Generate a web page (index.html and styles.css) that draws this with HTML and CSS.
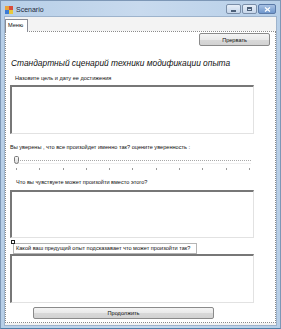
FILE: index.html
```html
<!DOCTYPE html>
<html lang="ru">
<head>
<meta charset="utf-8">
<title>Scenario</title>
<link rel="stylesheet" href="styles.css">
</head>
<body>
<div class="window">
  <div class="titlebar">
    <svg class="app-icon" width="8" height="8" viewBox="0 0 8 8">
      <rect x="0" y="0" width="4" height="4" fill="#e8a23a"/>
      <rect x="4" y="0" width="4" height="4" fill="#d94c3c"/>
      <rect x="0" y="4" width="4" height="4" fill="#3a7bd5"/>
      <rect x="4" y="4" width="4" height="4" fill="#e8c83a"/>
    </svg>
    <span class="title">Scenario</span>
    <div class="controls">
      <span class="ctl"><span class="glyph-min"></span></span>
      <span class="ctl"><span class="glyph-max"></span></span>
      <span class="ctl close"><svg width="7" height="5" viewBox="0 0 7 5"><path d="M1 0.5 L6 4.5 M6 0.5 L1 4.5" stroke="#fff" stroke-width="1.3"/></svg></span>
    </div>
  </div>
  <div class="client">
    <div class="tabs"><span class="tab">Меню</span></div>
    <div class="page">
      <div class="toprow"><button class="btn btn-stop">Прервать</button></div>
      <div class="heading">Стандартный сценарий техники модификации опыта</div>
      <div class="lbl lbl-goal">Назовите цель и дату ее достижения</div>
      <div class="box box-goal"></div>
      <div class="lbl lbl-sure">Вы уверены , что все произойдет именно так? оцените уверенность :</div>
      <div class="slider">
        <div class="track"></div>
        <div class="thumb"></div>
        <div class="ticks">
          <span></span><span></span><span></span><span></span><span></span><span></span><span></span><span></span><span></span><span></span><span></span>
        </div>
      </div>
      <div class="lbl lbl-feel">Что вы чувствуете может произойти вместо этого?</div>
      <div class="box box-feel"></div>
      <div class="qrow">
        <div class="qbox"><span class="handle"></span>Какой ваш предущий опыт подсказавает что может произойти так?</div>
      </div>
      <div class="box box-exp"></div>
      <div class="bottomrow"><button class="btn btn-next">Продолжить</button></div>
    </div>
  </div>
</div>
</body>
</html>
```
FILE: styles.css
```css
html, body {
  margin: 0;
  padding: 0;
}
body {
  width: 281px;
  height: 329px;
  overflow: hidden;
  font-family: "Liberation Sans", Arial, sans-serif;
  color: #111;
}
.window {
  width: 281px;
  height: 329px;
  box-sizing: border-box;
  background: linear-gradient(90deg, #b7cfe8 0%, #c8daee 50%, #b7cfe8 100%);
  border: 1px solid #7d97b6;
  border-bottom-color: #4f7fa8;
  padding: 0 3px 2px 3px;
  display: flex;
  flex-direction: column;
}
.titlebar {
  height: 15px;
  display: flex;
  align-items: center;
  flex: none;
}
.app-icon {
  margin-left: 1px;
  margin-top: 2px;
}
.title {
  font-size: 7px;
  margin-left: 3px;
  margin-top: 2px;
  color: #1e2a3a;
}
.controls {
  margin-left: auto;
  margin-right: 1px;
  margin-top: 1px;
  display: flex;
  gap: 1px;
}
.ctl {
  width: 15px;
  height: 10px;
  box-sizing: border-box;
  border: 1px solid #7a8ea8;
  border-radius: 2px;
  background: linear-gradient(#e6eef8, #c6d6ea);
  display: flex;
  align-items: center;
  justify-content: center;
}
.ctl.close {
  width: 18px;
  background: linear-gradient(#a9c2e4, #6f97cc);
  border-color: #5a7aa8;
}
.glyph-min {
  width: 5px;
  height: 2px;
  background: #4c5f78;
  margin-top: 3px;
}
.glyph-max {
  width: 5px;
  height: 4px;
  box-sizing: border-box;
  border: 1px solid #4c5f78;
  border-top-width: 2px;
}
.client {
  flex: 1;
  background: #f3f3f3;
  border: 1px solid #9db3cc;
  display: flex;
  flex-direction: column;
  padding: 1px 0 2px 0;
}
.tabs {
  height: 13px;
  display: flex;
  align-items: flex-end;
  flex: none;
}
.tab {
  height: 13px;
  box-sizing: border-box;
  width: 23px;
  border: 1px solid #898c95;
  border-bottom: none;
  background: #fff;
  font-size: 5.6px;
  line-height: 11px;
  padding-left: 2px;
  border-radius: 1px 1px 0 0;
  position: relative;
  top: 1px;
}
.page {
  flex: 1;
  background: #fff;
  border: 1px dotted #8a8a8a;
  display: flex;
  flex-direction: column;
}
.toprow {
  display: flex;
  justify-content: flex-end;
  margin-top: 1px;
  padding-right: 5px;
}
.btn {
  font-family: "Liberation Sans", Arial, sans-serif;
  font-size: 5.6px;
  height: 13px;
  padding: 0;
  box-sizing: border-box;
  border: 1px solid #8a8a8a;
  border-radius: 2px;
  background: linear-gradient(#f4f4f4 0%, #e9e9e9 50%, #d9d9d9 51%, #d2d2d2 100%);
  color: #111;
}
.btn-stop {
  width: 71px;
}
.heading {
  font-size: 8.4px;
  font-style: italic;
  line-height: 12px;
  margin-top: 11px;
  padding-left: 5px;
  white-space: nowrap;
}
.lbl {
  font-size: 5.6px;
  line-height: 8px;
  white-space: nowrap;
}
.lbl-goal {
  margin-top: 5px;
  padding-left: 9px;
}
.box {
  margin-left: 4px;
  width: 244px;
  box-sizing: border-box;
  border: 1px solid #e2e2e2;
  border-top: 2px solid #777;
  border-left: 2px solid #777;
  background: #fff;
}
.box-goal {
  margin-top: 3px;
  height: 49px;
}
.lbl-sure {
  margin-top: 9px;
  padding-left: 4px;
}
.slider {
  position: relative;
  height: 17px;
  margin-top: 4px;
  margin-left: 7px;
  width: 238px;
}
.track {
  position: absolute;
  left: 3px;
  right: 0;
  top: 5px;
  height: 2px;
  border-top: 1px dotted #a8a8a8;
  border-bottom: 1px solid #eee;
}
.thumb {
  position: absolute;
  left: 1px;
  top: 1px;
  width: 5px;
  height: 8px;
  box-sizing: border-box;
  border: 1px solid #777;
  border-radius: 2px 2px 3px 3px;
  background: linear-gradient(#fafafa, #dcdcdc);
}
.ticks {
  position: absolute;
  left: 3px;
  right: 1px;
  top: 13px;
  height: 2px;
  display: flex;
  justify-content: space-between;
}
.ticks span {
  width: 1px;
  height: 2px;
  background: #9a9a9a;
}
.lbl-feel {
  margin-top: 6px;
  padding-left: 10px;
}
.box-feel {
  margin-top: 4px;
  height: 48px;
}
.qrow {
  margin-top: 5px;
  padding-left: 7px;
  display: flex;
}
.qbox {
  position: relative;
  width: 184px;
  height: 11px;
  box-sizing: border-box;
  border: 1px solid #b5b5b5;
  font-size: 5.6px;
  line-height: 9px;
  padding-left: 2px;
  white-space: nowrap;
}
.handle {
  position: absolute;
  left: -3px;
  top: -4px;
  width: 2px;
  height: 2px;
  border: 1px solid #222;
  background: #fff;
}
.box-exp {
  margin-top: 0;
  height: 49px;
}
.bottomrow {
  margin-top: 4px;
  padding-left: 27px;
  display: flex;
}
.btn-next {
  width: 181px;
  height: 12px;
}
```
